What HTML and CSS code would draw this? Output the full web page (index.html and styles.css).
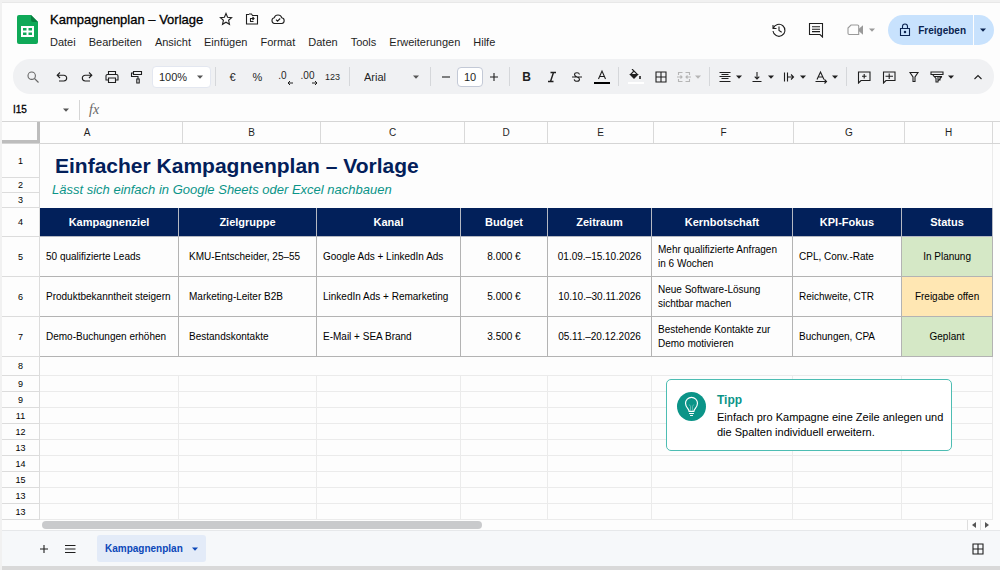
FILE: index.html
```html
<!DOCTYPE html>
<html lang="de">
<head>
<meta charset="utf-8">
<meta name="viewport" content="width=device-width, initial-scale=1">
<title>Kampagnenplan – Vorlage</title>
<link rel="stylesheet" href="styles.css">
</head>
<body>
<svg class="sprite" aria-hidden="true">
    <symbol id="caret" viewBox="0 0 6 4"><path d="M0 .5h6L3 3.7z" fill="currentColor"/></symbol>
    <symbol id="plus" viewBox="0 0 14 14"><path d="M7 3v8M3 7h8"/></symbol>
    <symbol id="grid" viewBox="0 0 14 14"><path d="M2 2h10v10H2zM7 2v10M2 7h10"/></symbol>
</svg>
<div class="window">
    <header>
        <svg class="logo" viewBox="0 0 21 29" aria-hidden="true">
            <path d="M2 0h12l7 7v20a2 2 0 0 1-2 2H2a2 2 0 0 1-2-2V2a2 2 0 0 1 2-2z" fill="#0fa958"/>
            <path d="M14 0l7 7h-5a2 2 0 0 1-2-2z" fill="#087f3f"/>
            <path d="M4 11h13v11H4zM6 13v2.500h3.500V13zM11.500 13v2.500H15V13zM6 17.500V20h3.500v-2.500zM11.500 17.500V20H15v-2.500z" fill="#fff" fill-rule="evenodd"/>
        </svg>
        <div class="heading">
            <div class="doc">
                <h1>Kampagnenplan – Vorlage</h1>
                <button aria-label="Markieren"><svg class="icon" viewBox="0 0 14 14"><path d="M7 1.500l1.600 3.700 4 .4-3 2.700.9 4L7 10.200l-3.500 2.100.9-4-3-2.700 4-.4z"/></svg></button>
                <button aria-label="Verschieben"><svg class="icon" viewBox="0 0 14 14"><path d="M4 2.500H1.500v9.500h11V3.500H7.500L6.500 2H4M8.500 9.500H5.500V6.500h3M7.500 5l1.500 1.500L7.500 8"/></svg></button>
                <button aria-label="In Drive gespeichert"><svg class="icon" viewBox="0 0 14 14"><path d="M3.500 11.500a2.900 2.900 0 0 1-.3-5.700 4 4 0 0 1 7.600 0 2.900 2.900 0 0 1 0 5.700zM5 7.700l1.500 1.500L9.200 6.500"/></svg></button>
            </div>
            <nav>
                <button>Datei</button>
                <button>Bearbeiten</button>
                <button>Ansicht</button>
                <button>Einfügen</button>
                <button>Format</button>
                <button>Daten</button>
                <button>Tools</button>
                <button>Erweiterungen</button>
                <button>Hilfe</button>
            </nav>
        </div>
        <div class="actions">
            <button aria-label="Versionsverlauf"><svg class="icon large" viewBox="0 0 16 16"><path d="M2 3v3.500h3.500M2.300 6.300A6 6 0 1 1 2 9M8 4.500V8.500l2.700 1.700"/></svg></button>
            <button aria-label="Kommentare"><svg class="icon large" viewBox="0 0 16 16"><path d="M1.500 1.500h13V15l-2.500-2.500H1.500zM4 4.800h8M4 7.200h8M4 9.600h8"/></svg></button>
            <button class="meet" aria-label="Videoanruf"><svg class="icon large" viewBox="0 0 16 16"><path d="M4 3h6.500a1.200 1.200 0 0 1 1.200 1.200v8.300H2.200a1.200 1.200 0 0 1-1.200-1.200V6z"/><path d="M12.500 7L15.500 4.500v7L12.500 9z" fill="currentColor"/></svg><svg class="caret"><use href="#caret"/></svg></button>
            <div class="share">
                <button><svg class="icon" viewBox="0 0 14 14"><path d="M2.500 5.500h9V12.500h-9zM4.500 5.500V3.500a2.500 2.500 0 0 1 5 0v2"/><circle cx="7" cy="9" r=".7"/></svg>Freigeben</button>
                <button aria-label="Freigabeoptionen"><svg class="caret"><use href="#caret"/></svg></button>
            </div>
        </div>
    </header>

    <div class="toolbar" role="toolbar">
        <button class="tool muted" aria-label="Suchen"><svg class="icon" viewBox="0 0 14 14"><circle cx="5.700" cy="5.700" r="3.700"/><path d="M8.500 8.500l4 4"/></svg></button>
        <button class="tool" aria-label="Rückgängig"><svg class="icon" viewBox="0 0 14 14"><path d="M5 2.500L2.200 5.200 5 8M2.500 5.200h6.300a2.900 2.900 0 0 1 0 5.800H4"/></svg></button>
        <button class="tool" aria-label="Wiederholen"><svg class="icon" viewBox="0 0 14 14"><path d="M9 2.500l2.800 2.700L9 8M11.500 5.200H5.200a2.900 2.900 0 0 0 0 5.800H10"/></svg></button>
        <button class="tool" aria-label="Drucken"><svg class="icon" viewBox="0 0 14 14"><path d="M3.500 4.500V1.500h7v3M3.500 10H1V6a1.500 1.500 0 0 1 1.500-1.500h9A1.500 1.500 0 0 1 13 6v4h-2.500M3.500 8h7v4.500h-7z"/></svg></button>
        <button class="tool" aria-label="Format übertragen"><svg class="icon" viewBox="0 0 14 14"><path d="M3.500 1.500h8v3h-8zM3.500 3H1.500v3.500H8v2.500M6.800 9h2.400v4H6.800z"/></svg></button>
        <label class="picker zoom"><select aria-label="Zoom"><option>100%</option></select><svg class="caret"><use href="#caret"/></svg></label>
        <hr>
        <button class="tool">€</button>
        <button class="tool">%</button>
        <button class="tool decimals" aria-label="Weniger Dezimalstellen">.0<svg viewBox="0 0 6 4"><path d="M6 2H1M3 0L1 2l2 2"/></svg></button>
        <button class="tool decimals" aria-label="Mehr Dezimalstellen">.00<svg viewBox="0 0 6 4"><path d="M0 2h5M3 0l2 2-2 2"/></svg></button>
        <button class="tool digits">123</button>
        <hr>
        <label class="picker font"><select aria-label="Schriftart"><option>Arial</option></select><svg class="caret"><use href="#caret"/></svg></label>
        <hr>
        <button class="tool step" aria-label="Kleiner"><svg class="icon" viewBox="0 0 14 14"><path d="M3 7h8"/></svg></button>
        <input class="size" type="text" value="10" aria-label="Schriftgröße">
        <button class="tool step" aria-label="Größer"><svg class="icon"><use href="#plus"/></svg></button>
        <hr>
        <button class="tool bold">B</button>
        <button class="tool" aria-label="Kursiv"><svg class="icon" viewBox="0 0 14 14"><path d="M5.500 2.500H11M3 11.500h5.500M8.500 2.500l-3 9" stroke-width="1.400"/></svg></button>
        <button class="tool" aria-label="Durchgestrichen"><svg class="icon" viewBox="0 0 14 14"><path d="M2 7h10M9.500 4.500C9.200 3.200 8.300 2.700 7 2.700c-1.500 0-2.500.7-2.500 1.900 0 1 .9 1.800 2.500 2.400 1.700.6 2.500 1.200 2.500 2.300 0 1.300-1 2-2.500 2s-2.600-.7-2.800-2"/></svg></button>
        <button class="tool" aria-label="Textfarbe"><svg class="icon tall" viewBox="0 0 16 16"><path d="M4.500 10L8 2l3.500 8M5.700 7.500h4.600"/><path d="M0 14h16" stroke="#000" stroke-width="2"/></svg></button>
        <hr>
        <button class="tool" aria-label="Füllfarbe"><svg class="icon tall" viewBox="0 0 16 16"><path d="M4 0l5.500 5.500L6 9 2.500 5.500 6 2"/><path d="M2.500 5.500h7L6 9z" fill="currentColor"/><path d="M12 7v3" stroke-width="1.600"/><path d="M0 14h16" stroke="#fff" stroke-width="2"/></svg></button>
        <button class="tool" aria-label="Rahmen"><svg class="icon"><use href="#grid"/></svg></button>
        <button class="tool split disabled" aria-label="Zellen verbinden"><svg class="icon" viewBox="0 0 14 14"><path d="M5.500 2.500H1.500V5M1.500 9v2.500h4M8.500 2.500h4V5M12.500 9v2.500h-4M0 7h5M3.500 5.500L5 7 3.500 8.500M14 7H9M10.500 5.500L9 7l1.500 1.500"/></svg><svg class="caret"><use href="#caret"/></svg></button>
        <hr>
        <button class="tool split" aria-label="Horizontal ausrichten"><svg class="icon" viewBox="0 0 14 14"><path d="M1.500 2.500h11M3.500 4.500h7M1.500 6.500h11M3.500 8.500h7M1.500 11.500h11"/></svg><svg class="caret"><use href="#caret"/></svg></button>
        <button class="tool split" aria-label="Vertikal ausrichten"><svg class="icon" viewBox="0 0 14 14"><path d="M2.500 11.500h9M7 2V9M4.700 6.700L7 9l2.300-2.300"/></svg><svg class="caret"><use href="#caret"/></svg></button>
        <button class="tool split" aria-label="Textumbruch"><svg class="icon" viewBox="0 0 14 14"><path d="M2.500 2.500v9M5.500 2.500v9M5.500 7h6M9 4.500L11.500 7 9 9.500"/></svg><svg class="caret"><use href="#caret"/></svg></button>
        <button class="tool split" aria-label="Textdrehung"><svg class="icon" viewBox="0 0 14 14"><path d="M3 9.500L6.500 2 10 9.500M4.200 7h4.600M1.500 11.500h10.500M10.500 9.500l2 2-2 2"/></svg><svg class="caret"><use href="#caret"/></svg></button>
        <hr>
        <button class="tool" aria-label="Kommentar einfügen"><svg class="icon" viewBox="0 0 14 14"><path d="M1.500 2h11.500v8.500H4L1.500 13zM7.200 4v4.500M5 6.200h4.500"/></svg></button>
        <button class="tool" aria-label="Diagramm einfügen"><svg class="icon" viewBox="0 0 14 14"><path d="M1.500 2h11.500v8.500H4L1.500 13zM7.200 3.500v5.500M3.500 6.200H11"/></svg></button>
        <button class="tool" aria-label="Filter"><svg class="icon" viewBox="0 0 14 14"><path d="M3 2.500h8L8 7v4.500H6V7z"/></svg></button>
        <button class="tool split" aria-label="Filteransichten"><svg class="icon" viewBox="0 0 14 14"><path d="M1 2h12v2.500H1zM2.500 4.500L6 8.500V12h2V6.500h4M3.500 6.500H10M10 6.500v4M12 6.500L8 11"/></svg><svg class="caret"><use href="#caret"/></svg></button>
        <button class="tool collapse" aria-label="Menüs ausblenden"><svg class="icon" viewBox="0 0 14 14"><path d="M3.500 9L7 5.500 10.500 9"/></svg></button>
    </div>

    <div class="formula">
        <label class="picker name"><input type="text" value="I15" aria-label="Namensfeld"><svg class="caret"><use href="#caret"/></svg></label>
        <label class="fx" for="formula">fx</label>
        <input id="formula" type="text">
    </div>

    <div class="columns">
        <span class="corner"></span>
        <span class="first">A</span><span>B</span><span>C</span><span>D</span><span>E</span><span>F</span><span>G</span><span>H</span>
    </div>

    <main>
        <table>
            <colgroup>
                <col class="rownum"><col class="goal"><col class="audience"><col class="channel"><col class="budget"><col class="period"><col class="message"><col class="kpi"><col class="state">
            </colgroup>
            <tbody>
                <tr class="title"><th>1</th><td colspan="8">Einfacher Kampagnenplan – Vorlage</td></tr>
                <tr class="subtitle"><th>2</th><td colspan="8" rowspan="2">Lässt sich einfach in Google Sheets oder Excel nachbauen</td></tr>
                <tr class="subtitle"><th>3</th></tr>
                <tr class="head"><th>4</th><td>Kampagnenziel</td><td>Zielgruppe</td><td>Kanal</td><td>Budget</td><td>Zeitraum</td><td>Kernbotschaft</td><td>KPI-Fokus</td><td>Status</td></tr>
                <tr class="data">
                    <th>5</th><td>50 qualifizierte Leads</td><td class="indent">KMU-Entscheider, 25–55</td><td>Google Ads + LinkedIn Ads</td><td class="center">8.000 €</td><td class="center">01.09.–15.10.2026</td><td>Mehr qualifizierte Anfragen<br>in 6 Wochen</td><td>CPL, Conv.-Rate</td><td class="center green">In Planung</td>
                </tr>
                <tr class="data">
                    <th>6</th><td>Produktbekanntheit steigern</td><td class="indent">Marketing-Leiter B2B</td><td>LinkedIn Ads + Remarketing</td><td class="center">5.000 €</td><td class="center">10.10.–30.11.2026</td><td>Neue Software-Lösung<br>sichtbar machen</td><td>Reichweite, CTR</td><td class="center yellow">Freigabe offen</td>
                </tr>
                <tr class="data">
                    <th>7</th><td>Demo-Buchungen erhöhen</td><td class="indent">Bestandskontakte</td><td>E-Mail + SEA Brand</td><td class="center">3.500 €</td><td class="center">05.11.–20.12.2026</td><td>Bestehende Kontakte zur<br>Demo motivieren</td><td>Buchungen, CPA</td><td class="center green">Geplant</td>
                </tr>
                <tr class="spacer"><th>8</th><td colspan="8"></td></tr>
                <tr><th>9</th><td></td><td></td><td></td><td></td><td></td><td></td><td></td><td></td></tr>
                <tr><th>9</th><td></td><td></td><td></td><td></td><td></td><td></td><td></td><td></td></tr>
                <tr><th>11</th><td></td><td></td><td></td><td></td><td></td><td></td><td></td><td></td></tr>
                <tr><th>12</th><td></td><td></td><td></td><td></td><td></td><td></td><td></td><td></td></tr>
                <tr><th>13</th><td></td><td></td><td></td><td></td><td></td><td></td><td></td><td></td></tr>
                <tr><th>14</th><td></td><td></td><td></td><td></td><td></td><td></td><td></td><td></td></tr>
                <tr><th>15</th><td></td><td></td><td></td><td></td><td></td><td></td><td></td><td></td></tr>
                <tr><th>13</th><td></td><td></td><td></td><td></td><td></td><td></td><td></td><td></td></tr>
                <tr><th>13</th><td></td><td></td><td></td><td></td><td></td><td></td><td></td><td></td></tr>
            </tbody>
        </table>
        <aside class="tip">
            <svg viewBox="0 0 30 30" aria-hidden="true">
                <circle cx="15" cy="15" r="15" fill="#0b9488"/>
                <path d="M12.500 20c0-2.500-3.700-4-3.700-8.300a6.200 6.200 0 0 1 12.400 0c0 4.300-3.700 5.800-3.700 8.300zM12.500 22.200h5M13.500 24.300h3" fill="none" stroke="#fff" stroke-width="1.200"/>
                <path d="M14 19.500v-4.500l-1.200-2M16 19.500v-4.500l1.200-2" fill="none" stroke="#8fd0ca" stroke-width=".7"/>
            </svg>
            <div>
                <h2>Tipp</h2>
                <p>Einfach pro Kampagne eine Zeile anlegen und<br>die Spalten individuell erweitern.</p>
            </div>
        </aside>
    </main>

    <div class="scroll">
        <div class="track"><div class="thumb"></div></div>
        <button aria-label="Nach links"><svg viewBox="0 0 4 6"><path d="M4 0v6L0 3z"/></svg></button>
        <button aria-label="Nach rechts"><svg viewBox="0 0 4 6"><path d="M0 0v6l4-3z"/></svg></button>
    </div>

    <footer>
        <button aria-label="Tabellenblatt hinzufügen"><svg class="icon"><use href="#plus"/></svg></button>
        <button aria-label="Alle Tabellenblätter"><svg class="icon" viewBox="0 0 14 14"><path d="M2 3.500h10.500M2 7h10.500M2 10.500h10.500"/></svg></button>
        <button class="tab">Kampagnenplan<svg class="caret"><use href="#caret"/></svg></button>
        <button class="explore" aria-label="Erkunden"><svg class="icon"><use href="#grid"/></svg></button>
    </footer>
</div>
</body>
</html>
```
FILE: styles.css
```css
* {
    box-sizing: border-box;
}

body {
    margin: 0;
    padding: 2px 0 0 2px;
    background: #f1f1f1;
    font-family: "Liberation Sans", Arial, sans-serif;
    font-size: 11px;
    color: #1f1f1f;
}

button, input, select {
    font: inherit;
    color: inherit;
    background: none;
    border: none;
    padding: 0;
    margin: 0;
}

button {
    cursor: pointer;
}

.sprite {
    display: none;
}

.window {
    background: #fdfdfd;
    border-top: 1px solid #e8e8e8;
    border-bottom: 4px solid #d9d9d9;
}

.icon {
    display: block;
    flex: none;
    width: 14px;
    height: 14px;
    fill: none;
    stroke: currentColor;
    stroke-width: 1.1;
}

.icon.large, .icon.tall {
    width: 16px;
    height: 16px;
}

.caret {
    flex: none;
    width: 6px;
    height: 4px;
}

/* header */
header {
    display: flex;
    align-items: flex-start;
    height: 56px;
    padding: 0 0 0 15px;
}

.logo {
    width: 21px;
    height: 29px;
    margin: 12px 12px 0 0;
}

.doc {
    display: flex;
    align-items: center;
    gap: 12px;
    height: 16px;
    margin-top: 8px;
}

h1 {
    margin: 0 4px 0 0;
    font-size: 13px;
    font-weight: normal;
    color: #000;
    -webkit-text-stroke: 0.3px #000;
}

nav {
    display: flex;
    gap: 13px;
    margin-top: 9px;
}

.actions {
    display: flex;
    align-items: center;
    gap: 21px;
    margin: 12px 6px 0 auto;
}

.meet {
    display: flex;
    align-items: center;
    gap: 6px;
    margin-left: 2px;
    color: #9a9a9a;
}

.share {
    display: flex;
    gap: 1px;
    margin-left: -8px;
    color: #0a2350;
    font-size: 10px;
    font-weight: bold;
}

.share button {
    display: flex;
    align-items: center;
    gap: 6px;
    height: 30px;
    padding: 0 7px 0 10px;
    background: #c8e2fd;
    border-radius: 15px 0 0 15px;
}

.share button:last-child {
    padding: 0 8px 0 6px;
    border-radius: 0 15px 15px 0;
}

/* toolbar */
.toolbar {
    display: flex;
    align-items: center;
    height: 35px;
    margin: 0 6px 0 11px;
    padding: 0 4px 0 7px;
    border-radius: 17px;
    background: #f0f1f3;
}

.toolbar hr {
    width: 1px;
    height: 19px;
    margin: 0 4px;
    border: none;
    background: #d5d7da;
}

.tool {
    display: flex;
    align-items: center;
    justify-content: center;
    flex: none;
    width: 25px;
    height: 25px;
}

.tool.muted {
    margin-right: 4px;
    color: #666;
}

.split {
    gap: 4px;
    width: 32px;
}

.step {
    width: 22px;
}

.disabled {
    color: #b5b5b5;
}

.bold {
    font-size: 12px;
    font-weight: bold;
}

.digits {
    font-size: 9px;
}

.decimals {
    position: relative;
    padding-bottom: 3px;
    font-size: 10px;
}

.decimals svg {
    position: absolute;
    right: 2px;
    bottom: 4px;
    width: 6px;
    height: 4px;
    fill: none;
    stroke: currentColor;
}

.collapse {
    margin-left: auto;
}

.picker {
    display: grid;
    align-items: center;
    flex: none;
}

.picker > * {
    grid-area: 1 / 1;
}

.picker select {
    appearance: none;
    height: 20px;
}

.picker .caret {
    justify-self: end;
    margin-right: 7px;
    color: #555;
    pointer-events: none;
}

.zoom {
    width: 59px;
    margin-left: 3px;
    background: #fff;
    border: 1px solid #e3e7f0;
    border-radius: 4px;
}

.zoom select {
    padding-left: 6px;
}

.font {
    width: 72px;
}

.font select {
    padding-left: 10px;
}

.size {
    width: 26px;
    height: 20px;
    text-align: center;
    background: #fff;
    border: 1px solid #c3c9d6;
    border-radius: 4px;
}

/* formula bar */
.formula {
    display: flex;
    align-items: center;
    height: 27px;
    padding-top: 4px;
}

.name {
    width: 78px;
    height: 20px;
    border-right: 1px solid #d5d5d5;
}

.name .caret {
    margin-right: 10px;
}

.name input {
    width: 60px;
    padding-left: 11px;
    font-size: 10px;
    color: #000;
    -webkit-text-stroke: 0.3px #000;
}

.fx {
    padding: 0 9px;
    font-family: "Liberation Serif", serif;
    font-size: 14px;
    font-style: italic;
    color: #666;
}

#formula {
    flex: 1;
}

/* column letters */
.columns {
    display: grid;
    grid-template-columns: 38px 143fr 138fr 144fr 83fr 106fr 140fr 111fr 88fr;
    height: 23px;
    padding-right: 7px;
    border-top: 1px solid #d5d5d5;
    border-bottom: 1px solid #d5d5d5;
    font-size: 10px;
    line-height: 21px;
    text-align: center;
}

.columns span {
    border-right: 1px solid #d9d9d9;
}

.columns .first {
    padding-right: 48px;
}

.columns .corner {
    border-right: 3px solid #bdbdbd;
    border-bottom: 3px solid #bdbdbd;
}

/* sheet */
main {
    position: relative;
    padding-right: 7px;
}

table {
    width: 100%;
    table-layout: fixed;
    border-collapse: separate;
    border-spacing: 0;
    font-size: 10px;
    color: #000;
}

.rownum { width: 38px; }
.goal { width: 139px; }
.audience { width: 138px; }
.channel { width: 144px; }
.budget { width: 87px; }
.period { width: 104px; }
.message { width: 141px; }
.kpi { width: 109px; }
.state { width: 91px; }

tr {
    height: 16px;
}

th, td {
    padding: 0;
    border-right: 1px solid #ebebeb;
    border-bottom: 1px solid #ebebeb;
    line-height: 14px;
}

th {
    border-color: #dcdcdc;
    font-size: 9px;
    font-weight: normal;
}

.title {
    height: 34px;
}

.title td {
    padding: 9px 0 0 15px;
    border-bottom: none;
    font-size: 21px;
    font-weight: bold;
    line-height: 24px;
    color: #03205a;
}

.subtitle {
    height: 15px;
}

.subtitle td {
    padding: 0 0 6px 12px;
    border-bottom: none;
    font-size: 13px;
    font-style: italic;
    color: #0b9488;
}

.head {
    height: 29px;
}

.head td {
    background: #02205a;
    border-color: #b4b8c2;
    font-size: 11px;
    font-weight: bold;
    text-align: center;
    color: #fff;
}

.data {
    height: 40px;
}

.data td {
    padding: 0 6px;
    border-color: #b3b3b3;
    white-space: nowrap;
}

.data .indent {
    padding-left: 10px;
}

.data .center {
    padding: 0;
    text-align: center;
}

.green {
    background: #d5e8c6;
}

.yellow {
    background: #ffe7b3;
}

.spacer {
    height: 19px;
}

.tip {
    position: absolute;
    top: 235px;
    right: 48px;
    display: flex;
    gap: 11px;
    width: 286px;
    padding: 12px 8px 10px 10px;
    background: #fff;
    border: 1px solid #4dbdb3;
    border-radius: 5px;
    color: #000;
}

.tip svg {
    flex: none;
    width: 29px;
    height: 29px;
}

.tip h2 {
    margin: 0 0 2px;
    font-size: 12px;
    line-height: 16px;
    color: #0b9488;
}

.tip p {
    margin: 0;
    line-height: 15px;
    white-space: nowrap;
}

/* scrollbar and sheet tabs */
.scroll {
    display: flex;
    height: 10px;
    padding-right: 7px;
}

.track {
    flex: 1;
    padding: 1px 0 0 40px;
}

.thumb {
    width: 440px;
    max-width: 48%;
    height: 8px;
    border-radius: 4px;
    background: #c9cacc;
}

.scroll button {
    display: flex;
    align-items: center;
    justify-content: center;
    width: 13px;
    border-left: 1px solid #dedede;
}

.scroll button svg {
    width: 4px;
    height: 6px;
    fill: #555;
}

footer {
    display: flex;
    align-items: center;
    gap: 12px;
    height: 36px;
    padding: 0 15px 0 35px;
    background: #f6f8fa;
    border-top: 1px solid #e6e8ea;
}

.tab {
    display: flex;
    align-items: center;
    gap: 9px;
    height: 27px;
    margin-left: 8px;
    padding: 0 8px;
    border-radius: 3px;
    background: #e3ebf8;
    color: #0b47b8;
    font-size: 10px;
    font-weight: bold;
}

.explore {
    margin-left: auto;
}
```
